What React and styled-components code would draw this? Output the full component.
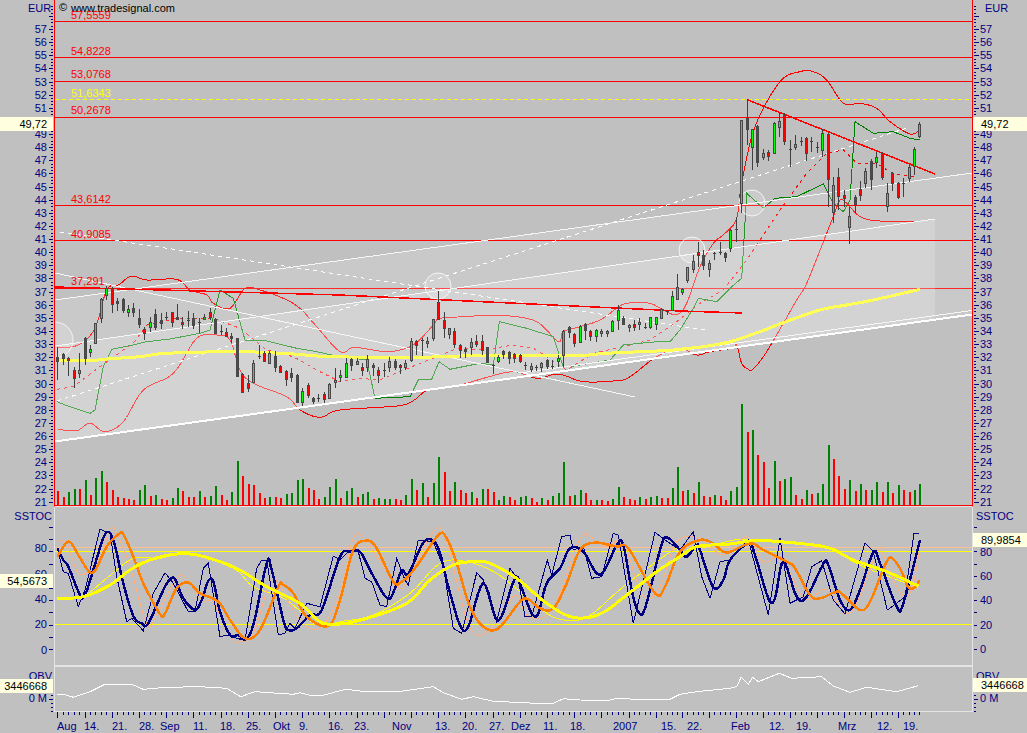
import React from 'react';
import styled, { createGlobalStyle } from 'styled-components';

const GlobalStyle = createGlobalStyle`
  html, body { margin: 0; padding: 0; background: #c0c0c0; }
  body { font-family: "Liberation Sans", Arial, sans-serif; }
`;

// Layout
const Chart = styled.div`
  position: relative;
  width: 1027px;
  height: 733px;
  overflow: hidden;
  display: flex;
  flex-direction: column;
  background: #c0c0c0;
`;

const Pane = styled.div`
  position: relative;
  display: flex;
  height: ${(p) => p.$h}px;
`;

const Axis = styled.svg`
  display: block;
  width: 54px;
  height: 100%;
  flex: none;
`;

const Plot = styled.svg`
  display: block;
  box-sizing: content-box;
  flex: none;
  width: 917px;
  height: ${(p) => p.$h}px;
  border-left: 1px solid ${(p) => p.$edge};
  border-right: 1px solid ${(p) => p.$edge};
  border-bottom: ${(p) => p.$bottom}px solid #e4e4e4;
`;

const DateAxis = styled.svg`
  display: block;
  width: 1027px;
  height: 21px;
`;

const Badge = styled.div`
  position: absolute;
  top: ${(p) => p.$top}px;
  ${(p) => (p.$right ? 'left: 973px; padding-left: 8px; width: 46px;' : 'left: 0; text-align: right; padding-right: 6px; width: 47px;')}
  height: 14px;
  line-height: 14px;
  background: #ffffe0;
  color: #000;
  font-size: 11px;
`;

// Chart parts
const Label = styled.text`
  font-family: "Liberation Sans", Arial, sans-serif;
  font-size: 11px;
  fill: ${(p) => p.$color || '#000080'};
`;

const Tick = styled.line`
  stroke: #000080;
  stroke-width: 1;
  shape-rendering: crispEdges;
`;

const Trace = styled.polyline`
  fill: none;
  stroke: ${(p) => p.$color};
  stroke-width: ${(p) => p.$w || 1};
  stroke-dasharray: ${(p) => p.$dash || 'none'};
  shape-rendering: crispEdges;
`;

const Level = styled.line`
  stroke: ${(p) => p.$color || '#ff0000'};
  stroke-width: ${(p) => p.$w || 1};
  stroke-dasharray: ${(p) => p.$dash || 'none'};
  shape-rendering: crispEdges;
`;

const Band = styled.polygon`
  fill: rgba(255, 255, 255, ${(p) => p.$alpha});
  stroke: none;
`;

const Ring = styled.circle`
  fill: rgba(255, 255, 255, 0.18);
  stroke: #f4f4f4;
  stroke-width: 1;
`;

const Wick = styled.line`
  stroke: #404040;
  stroke-width: 1;
  shape-rendering: crispEdges;
`;

const Body = styled.rect`
  fill: ${(p) => (p.$up ? '#00ff00' : '#ff0000')};
  stroke: #484848;
  stroke-width: 1;
  shape-rendering: crispEdges;
`;

const VolumeBar = styled.rect`
  fill: ${(p) => (p.$up ? '#008000' : '#ff0000')};
  shape-rendering: crispEdges;
`;

// Data, read off the picture in zoomed pixels: x,y pairs at 3x with an offset
const trace = (offX, offY, flat) => {
  const out = [];
  for (let i = 0; i < flat.length; i += 2) out.push([offX + flat[i] / 3, offY + flat[i + 1] / 3]);
  return out;
};

// Catmull-Rom through the read points, the indicators are curves in the picture
const smooth = (pts) => {
  const out = [];
  for (let i = 0; i < pts.length - 1; i++) {
    const a = pts[Math.max(i - 1, 0)];
    const b = pts[i];
    const c = pts[i + 1];
    const d = pts[Math.min(i + 2, pts.length - 1)];
    for (let s = 0; s < 6; s++) {
      const t = s / 6;
      const f = (k) => 0.5 * (2 * b[k] + (c[k] - a[k]) * t + (2 * a[k] - 5 * b[k] + 4 * c[k] - d[k]) * t * t + (3 * b[k] - a[k] - 3 * c[k] + d[k]) * t * t * t);
      out.push([f(0), f(1)]);
    }
  }
  out.push(pts[pts.length - 1]);
  return out;
};

const toPoints = (pts) => pts.map(([x, y]) => `${x.toFixed(1)},${y.toFixed(1)}`).join(' ');

const barX = (i) => (i <= 114 ? 57.3 + 5.44 * i : 681.7 + 5.4 * (i - 115));
const priceY = (p) => 29 + (57 - p) * 13.13;

const candlesA = [
  [230,330,262,272,'r'],[250,285,252,265,'r'],[262,318,265,270,'r'],[292,355,300,325,'r'],[250,325,300,308,'g'],
  [200,285,203,263,'r'],[225,262,237,245,'g'],[158,220,160,220,'g'],[85,160,88,145,'g'],[48,90,55,75,'g'],
  [50,130,55,103,'r'],[85,122,92,100,'r'],[85,130,88,120,'r'],[105,140,118,127,'g'],[100,140,115,127,'r'],
  [118,175,145,163,'r'],[170,210,178,190,'r'],[140,185,157,172,'g'],[118,180,133,170,'r'],[128,178,150,160,'r'],
  [127,150,141,141,'d'],[125,170,127,155,'r'],[103,150,140,145,'r'],[140,178,155,163,'r'],[123,170,149,149,'d'],
  [128,178,145,165,'r'],[145,190,156,156,'d'],[133,150,140,145,'g'],[115,150,127,142,'r'],[145,188,147,188,'r'],
  [165,195,183,183,'d'],[175,200,187,197,'r'],[190,220,198,205,'r'],[205,320,205,318,'r'],[310,370,312,365,'r'],
  [315,365,340,355,'r'],[270,338,280,335,'g'],[225,268,257,257,'d'],[243,275,248,272,'r'],[243,280,248,278,'g'],
  [243,305,258,290,'r'],[285,310,288,305,'r'],[300,348,302,328,'r'],[295,335,310,322,'r'],[312,400,314,397,'r'],
  [355,408,362,395,'g'],[340,385,344,375,'r'],[380,403,385,393,'r'],[373,395,383,383,'d'],[365,398,373,388,'r'],
  [340,385,343,383,'g'],[295,355,330,337,'g'],[300,335,315,322,'g'],[265,320,278,320,'g'],[265,303,267,285,'r'],
  [265,285,273,281,'g'],[280,318,291,299,'r'],[255,305,267,290,'g'],[280,318,284,290,'r'],[292,338,300,315,'r'],
  [280,320,299,299,'d'],[260,305,273,290,'g'],[268,300,273,290,'r'],[282,312,284,291,'r'],[270,300,278,290,'g'],
  [205,275,212,270,'g'],[210,255,212,225,'r'],[205,258,210,210,'d'],[200,235,213,220,'g'],[148,212,148,205,'g'],
  [62,150,95,148,'r'],[125,205,150,173,'r'],[175,207,175,193,'g'],[175,235,183,223,'r'],[222,263,224,240,'r'],
  [232,263,236,241,'r'],[205,255,217,230,'g'],[195,232,213,222,'r'],[195,255,213,240,'r'],[230,280,232,277,'r'],
  [282,312,285,285,'d'],[255,280,262,272,'g'],[240,268,243,252,'r'],[243,283,245,265,'r'],[250,280,252,263,'r'],
  [252,280,255,272,'r'],[275,300,285,285,'d'],[280,305,288,298,'g'],[285,303,290,290,'d'],[275,305,280,290,'g'],
  [268,298,270,287,'r'],[270,296,287,287,'d'],[255,292,264,272,'g'],[180,290,182,255,'g'],[168,205,170,187,'r'],
  [190,230,192,220,'r'],[165,218,167,217,'g'],[160,210,162,180,'r'],[180,212,182,197,'r'],[177,215,179,197,'g'],
  [178,200,184,190,'g'],[180,200,182,185,'g'],[150,185,152,182,'g'],[105,180,120,150,'g'],[138,165,145,162,'r'],
  [162,185,164,170,'g'],[150,183,163,172,'r'],[145,180,155,163,'g'],[160,178,170,170,'d'],[140,178,142,170,'g'],
  [140,180,142,162,'g'],[115,145,117,145,'g'],[120,135,122,122,'d'],[63,120,78,120,'g'],[12,90,52,88,'g'],
];

const candlesB = [
  [655,675,658,665,'g'],[590,640,592,630,'g'],[555,610,572,598,'g'],[515,590,545,555,'r'],[540,600,555,585,'r'],
  [570,622,580,598,'g'],[545,570,548,548,'d'],[515,555,545,545,'d'],[545,575,550,560,'r'],[478,545,480,535,'g'],
  [440,515,478,478,'d'],[150,430,150,400,'g'],[88,225,143,178,'r'],[178,300,178,230,'g'],[165,290,167,277,'r'],
  [238,270,250,260,'g'],[240,272,245,257,'r'],[155,252,160,250,'g'],[130,202,153,172,'g'],[130,225,135,213,'r'],
  [210,290,238,238,'d'],[195,240,223,232,'g'],[200,228,212,212,'d'],[200,272,203,250,'r'],[200,247,212,212,'d'],
  [215,250,232,232,'d'],[178,262,190,240,'g'],[190,410,192,328,'r'],[322,460,346,427,'g'],[295,420,322,377,'r'],
  [360,410,374,384,'r'],[410,522,438,472,'g'],[375,428,381,403,'r'],[332,392,358,374,'r'],[295,355,303,340,'g'],
  [268,360,272,328,'r'],[245,295,260,277,'g'],[245,330,250,320,'r'],[340,425,368,408,'g'],[305,362,308,340,'r'],
  [335,388,338,380,'r'],[325,382,340,340,'d'],[285,335,292,323,'g'],[232,315,238,288,'g'],[155,203,163,197,'g'],
];

const candles = [
  ...candlesA.map((c, i) => ({ i, off: 270, c })),
  ...candlesB.map((c, i) => ({ i: i + 115, off: 70, c })),
];

const volumes = [
  // first stretch: 3x offset 270
  ...[[663,0],[680,0],[666,1],[657,1],[657,0],[630,1],[675,0],[624,1],[603,1],[636,0],[660,0],[681,0],[684,0],[686,0],[690,0],[660,1],[645,1],[678,0],[675,1],[687,0],[690,0],[684,1],[654,1],[663,0],[681,0],[681,0],[663,1],[681,0],[678,1],[648,1],[675,0],[690,0],[666,1],[573,1],[618,0],[642,0],[645,0],[669,0],[684,0],[681,1],[681,0],[684,0],[672,1],[669,1],[630,1],[627,1],[654,0],[660,0],[687,0],[681,1],[651,1],[627,1]],
  ...[[684,0],[663,1],[654,1],[681,0],[672,1],[666,1],[687,0],[684,1],[687,1],[687,1],[687,0],[690,0],[675,1],[627,1],[660,0],[639,1],[681,0],[639,1],[561,1],[606,0],[663,0],[636,1],[660,0],[669,0],[666,1],[684,0],[657,1],[657,0],[666,0],[690,1],[678,1],[681,0],[690,0],[681,1],[678,1],[684,0],[696,0],[684,1],[690,0],[678,1],[669,1],[576,1],[678,0],[675,1],[660,1],[669,0],[690,0],[690,1],[690,0],[693,0],[687,1],[651,1],[681,0],[687,0],[690,0],[681,1],[687,0],[681,1],[678,1],[684,0],[684,0],[654,1],[591,1]],
].map(([t, up]) => [270 + t / 3, up]).concat(
  // last stretch: 3x offset 300
  [[573,0],[570,1],[579,0],[546,1],[588,0],[591,0],[585,1],[588,0],[600,0],[573,1],[561,1],[312,1],[396,0],[390,1],[465,0],[486,0],[564,0],[483,1],[543,0],[537,1],[531,1],[585,0],[597,0],[570,1],[582,0],[579,1],[552,1],[435,1],[477,0],[528,0],[567,0],[540,1],[573,0],[552,1],[570,0],[570,1],[546,1],[576,0],[546,1],[579,0],[555,1],[570,0],[576,0],[570,1],[552,1]].map(([t, up]) => [300 + t / 3, up])
);

const upperBand = smooth([
  ...trace(0, 270, [175,232,235,225,285,175,320,60,355,45,395,18,440,30,530,28,570,60,620,75,640,100,690,115,735,55,780,60,850,85,900,115,950,170,1020,245]),
  ...trace(340, 270, [40,232,100,240,150,245,220,225,280,165,300,145,380,140,420,137,500,137,590,155,655,215,670,185,720,170,780,150,830,115,860,100,930,100,1020,130]),
  ...trace(680, 70, [60,590,100,520,135,490,170,445,185,340,225,170,300,35,360,5,400,5,440,30,490,100,540,100,590,115,630,155,690,192,720,180]),
]);
const midBand = [
  ...trace(0, 270, [172,358,220,350,300,290,370,240,400,220,440,165,530,145,640,145,720,175,800,240,880,260,960,305,1020,335]),
  ...trace(340, 270, [60,325,120,330,190,300,280,265,350,235,430,240,520,225,580,235,620,260,680,300,760,250,850,230,930,210,1010,155]),
  ...trace(680, 70, [60,700,130,660,200,570,300,420,380,310,440,250,490,240,530,280,590,280,640,312,710,322]),
];
const greenBand = [
  ...trace(0, 270, [172,395,200,407,270,430,285,420,310,290,335,238,400,225,440,215,510,207,600,190,630,180,660,60,700,85,735,210,790,210,890,235,950,245,1020,260]),
  ...trace(340, 270, [80,270,105,385,210,380,235,330,275,328,297,275,330,298,420,280,460,285,478,155,560,175,640,200,670,290,690,290,810,270,850,225,950,215,990,215,1020,180]),
  ...trace(680, 70, [40,715,55,685,110,695,155,650,185,625,200,370,250,415,285,385,350,380,430,342,460,400,490,425,510,390,525,155,580,190,640,185,690,205,720,210]),
];
const lowerBand = smooth([
  ...trace(0, 270, [175,478,230,482,270,460,315,485,370,455,430,360,520,310,590,205,650,195,690,210,720,300,760,340,860,380,900,420,960,442,1020,420]),
  ...trace(340, 270, [170,408,220,392,265,360,360,345,430,325,520,305,590,325,655,312,730,335,830,332,870,320,950,260,1020,235]),
  ...trace(680, 300, [50,165,90,155,155,145,170,135,185,190,205,208,218,208,260,155,350,0]),
  ...trace(680, 70, [380,640,440,490,460,440,480,390,500,400,550,445,640,455,710,455]),
]);
const average = smooth([
  ...trace(0, 270, [172,272,270,272,320,267,420,260,500,250,700,245,850,250,950,258,1020,260]),
  ...trace(340, 270, [90,263,240,262,440,256,700,257,800,250,950,243,1020,238]),
  ...trace(680, 300, [130,130,240,95,310,68,420,30,500,15,580,0]),
  ...trace(680, 70, [720,658]),
]);
const fallingRed = trace(0, 0, [165,861,1020,885,2040,933,2226,939]);

const navyThick = smooth([
  ...trace(0, 500, [172,145,190,180,205,200,240,285,255,285,280,210,315,103,340,120,370,250,400,348,425,370,445,370,490,270,510,238,525,238,550,295,585,330,605,300,625,243,640,245,660,335,690,405,715,405,735,418,760,375,800,190,815,210,850,360,865,390,890,385,930,345,965,330,1020,170]),
  ...trace(340, 500, [30,155,60,155,90,210,135,288,155,288,185,212,205,222,250,128,280,122,300,160,325,260,360,375,385,380,430,250,475,362,525,235,545,265,575,340,595,340,620,250,660,205,690,145,730,155,780,225,830,135,850,135,875,270,895,335,915,325,960,150,980,112,1020,150]),
  ...trace(680, 500, [20,170,50,135,60,150,100,262,130,240,150,180,205,130,225,165,265,295,285,295,310,185,350,290,380,290,430,192,445,195,480,300,510,330,540,270,580,157,600,190,650,320,670,310,720,120]),
]);
const navyThin = [
  ...trace(0, 500, [172,145,190,215,205,220,235,320,255,270,300,88,330,100,350,230,380,365,395,355,430,392,460,280,495,218,520,250,565,335,585,335,610,205,625,190,660,410,680,405,735,422,770,205,785,180,800,180,835,405,855,400,870,370,885,385,920,310,960,320,1000,168,1020,180]),
  ...trace(340, 500, [30,150,55,155,75,235,95,245,120,315,140,320,170,175,195,240,205,255,235,120,280,125,310,200,340,385,365,400,410,218,430,240,470,365,510,205,535,240,555,350,575,350,622,180,635,225,665,110,690,105,700,150,730,140,755,235,785,230,820,100,835,105,880,370,945,97,975,120,1020,150]),
  ...trace(680, 500, [40,95,65,230,90,295,120,185,150,180,205,120,265,345,300,115,330,310,370,290,395,200,425,182,460,300,495,342,555,128,580,155,622,330,650,310,675,290,702,100,717,100]),
];
const orangeThick = smooth([
  ...trace(0, 500, [172,170,205,125,235,165,265,212,285,212,320,140,355,103,370,103,400,170,430,250,480,342,495,340,530,265,565,248,600,280,655,305,690,360,735,415,780,390,835,260,850,255,880,280,920,350,985,378,1020,300]),
  ...trace(340, 500, [40,150,80,122,110,145,160,245,185,245,225,205,295,105,320,115,350,190,390,320,430,380,475,385,540,305,565,298,600,325,640,325,680,250,720,150,765,128,830,140,865,145,945,280,975,260,1020,155]),
  ...trace(680, 500, [60,120,100,130,140,158,210,130,250,150,320,185,345,205,390,285,420,295,470,275,490,285,540,330,570,305,620,185,640,178,665,215,685,262,705,262,718,240]),
]);
const orangeThin = smooth([
  ...trace(0, 500, [172,125,200,130,240,225,300,170,330,88,350,100,390,200,440,370,470,345,530,235,565,240,605,300,640,310,695,415,720,425,760,400,810,245,835,250,885,340,930,385,970,375,1020,280]),
  ...trace(340, 500, [40,115,75,120,170,255,200,245,280,95,320,125,390,385,460,380,525,285,565,350,640,325,720,115,770,125,800,140,850,130,910,290,960,260,1010,125]),
  ...trace(680, 500, [60,115,130,165,200,110,250,185,300,170,340,240,380,300,440,268,510,340,590,160,610,165,650,260,680,290,700,250,717,160]),
]);
const yellowThick = smooth([
  ...trace(0, 500, [172,295,250,290,330,255,390,210,450,180,530,162,590,165,660,185,720,210,800,260,900,310,960,365,1020,372]),
  ...trace(340, 500, [80,355,200,310,270,240,340,195,400,185,450,190,530,235,620,310,700,352,780,342,860,285,950,215,1020,170]),
  ...trace(680, 500, [50,140,150,132,220,122,300,125,440,142,520,180,620,215,715,258]),
]);
const yellowThin = smooth([
  ...trace(0, 500, [172,295,250,288,320,235,400,175,480,175,560,160,700,205,760,260,860,300,950,375,1020,365]),
  ...trace(340, 500, [100,345,210,280,300,190,380,185,470,220,570,300,650,355,740,352,850,260,1000,150,1020,160]),
  ...trace(680, 500, [100,135,180,118,300,122,430,140,540,195,640,235,715,262]),
]);
const obv = [
  ...trace(0, 500, [172,585,190,582,220,592,270,575,315,553,400,555,430,568,500,562,600,560,680,565,722,590,765,575,880,583,900,578,930,586,970,586,1020,572]),
  ...trace(340, 500, [20,568,60,573,190,573,280,560,310,578,365,598,400,590,460,604,590,610,640,610,670,596,720,600,800,602,835,594,880,598,990,598,1020,583]),
  ...trace(680, 500, [50,575,150,565,170,560,183,532,205,552,218,532,235,545,298,520,335,535,425,530,460,558,510,577,560,562,650,575,715,557]),
];

const redLevels = [21, 57, 80.5, 117, 205, 240];
const levelTexts = [
  ['57,5559', 19, '#ff0000'], ['54,8228', 55, '#ff0000'], ['53,0768', 78, '#ff0000'], ['51,6343', 97, '#ffff00'],
  ['50,2678', 114, '#ff0000'], ['43,6142', 203, '#ff0000'], ['40,9085', 238, '#ff0000'], ['37,291', 285, '#ff0000'],
];
const dates = [
  ['Aug',57],['14.',84],['21.',112],['28.',139],['Sep',160],['11.',193],['18.',220],['25.',246],['Okt',273],['9.',299],['16.',328],
  ['23.',354],['Nov',392],['13.',435],['20.',462],['27.',489],['Dez',511],['11.',543],['18.',570],['2007',613],['15.',661],
  ['22.',687],['Feb',731],['12.',769],['19.',796],['Mrz',838],['12.',877],['19.',903],
];

const range = (from, to, step) => {
  const out = [];
  for (let v = from; v <= to + 1e-6; v += step) out.push(v);
  return out;
};

// One price axis: the side decides where the ticks and numbers sit
const PriceAxis = ({ right }) => (
  <Axis viewBox={right ? '973 0 54 507' : '0 0 54 507'}>
    <Label x={right ? 985 : 28} y={12}>EUR</Label>
    {range(21, 58.75, 0.25).map((p) => {
      const major = Number.isInteger(p);
      const y = Math.round(priceY(p)) + 0.5;
      return right
        ? <Tick key={p} x1={974} x2={major ? 979 : 976} y1={y} y2={y} />
        : <Tick key={p} x1={major ? 49 : 51} x2={53} y1={y} y2={y} />;
    })}
    {range(21, 57, 1).map((p) => (
      <Label key={p} x={right ? 980 : 47} y={priceY(p) + 4} textAnchor={right ? 'start' : 'end'}>{p}</Label>
    ))}
  </Axis>
);

const StochAxis = ({ right }) => {
  const rows = right
    ? [[80, 552], [60, 576], [40, 600], [20, 625], [0, 649]]
    : [[80, 548], [60, 574], [40, 599], [20, 624], [0, 650]];
  return (
    <Axis viewBox={right ? '973 507 54 160' : '0 507 54 160'}>
      <Label x={right ? 976 : 52} y={520} textAnchor={right ? 'start' : 'end'}>SSTOC</Label>
      {range(527, 660, 12.2).map((y) => {
        const yy = Math.round(y) + 0.5;
        return right
          ? <Tick key={y} x1={974} x2={977} y1={yy} y2={yy} />
          : <Tick key={y} x1={49} x2={53} y1={yy} y2={yy} />;
      })}
      {rows.map(([v, y]) => (
        <Label key={v} x={right ? 980 : 47} y={y + 4} textAnchor={right ? 'start' : 'end'}>{v}</Label>
      ))}
    </Axis>
  );
};

const ObvAxis = ({ right }) => (
  <Axis viewBox={right ? '973 667 54 44' : '0 667 54 44'}>
    <Label x={right ? 976 : 52} y={679} textAnchor={right ? 'start' : 'end'}>OBV</Label>
    <Label x={right ? 980 : 47} y={701} textAnchor={right ? 'start' : 'end'}>0 M</Label>
    <Label x={right ? 980 : 47} y={719} textAnchor={right ? 'start' : 'end'}>-5 M</Label>
    {range(686, 710, 4).map((y) => (
      right
        ? <Tick key={y} x1={974} x2={y === 698 ? 978 : 976} y1={y + 0.5} y2={y + 0.5} />
        : <Tick key={y} x1={y === 698 ? 49 : 51} x2={53} y1={y + 0.5} y2={y + 0.5} />
    ))}
  </Axis>
);

const Candle = ({ i, off, c }) => {
  const [hi, lo, top, bot, kind] = c;
  const x = Math.round(barX(i));
  const y = (v) => Math.round(off + v / 3);
  return (
    <g>
      <Wick x1={x + 0.5} x2={x + 0.5} y1={y(hi)} y2={y(lo)} />
      {kind === 'd'
        ? <Wick x1={x - 1} x2={x + 2} y1={y(top) + 0.5} y2={y(top) + 0.5} />
        : <Body $up={kind === 'g'} x={x - 1 + 0.5} y={y(top) + 0.5} width={2} height={Math.max(y(bot) - y(top), 2)} />}
    </g>
  );
};

export default function App() {
  return (
    <Chart>
      <GlobalStyle />

      <Pane $h={507}>
        <PriceAxis />
        <Plot viewBox="55 0 917 506" $h={506} $edge="#ff0000" $bottom={1}>
          {/* lines that lie under the pale channels */}
          <Level x1={55} x2={972} y1={288.5} y2={288.5} />
          <Trace points={toPoints(upperBand)} $color="#ff0000" />
          <Trace points={toPoints(midBand)} $color="#ff0000" $dash="3 4" />
          <Trace points={toPoints(greenBand)} $color="#008000" />
          <Trace points={toPoints(lowerBand)} $color="#ff0000" />

          <Band points="55,300 972,173 972,314 55,441" $alpha={0.15} />
          <Band points="55,346 935,219 935,320 55,441" $alpha={0.2} />

          {redLevels.map((y) => <Level key={y} x1={55} x2={972} y1={y + 0.5} y2={y + 0.5} />)}
          <Level x1={55} x2={972} y1={99.5} y2={99.5} $color="#ffff00" $dash="4 3" />

          <Level x1={55} x2={972} y1={300} y2={173} $color="#f6f6f6" />
          <Level x1={55} x2={935} y1={346} y2={219} $color="#f6f6f6" />
          <Level x1={55} x2={972} y1={441.5} y2={314.5} $color="#ffffff" $w={2} />
          <Level x1={520} x2={972} y1={373} y2={310.5} $color="#f6f6f6" />
          <Level x1={55} x2={635} y1={273} y2={397} $color="#f6f6f6" />
          <Level x1={57} x2={910} y1={401} y2={127} $color="#ffffff" $dash="4 4" />
          <Level x1={60} x2={705} y1={232} y2={330} $color="#ffffff" $dash="4 4" />

          <Trace points={toPoints(average)} $color="#ffff55" $w={3} />
          <Trace points={toPoints(fallingRed)} $color="#ff0000" $w={1.5} />
          <Level x1={748} x2={935} y1={100} y2={174} $w={1.5} />

          <Ring cx={55} cy={340} r={18} />
          <Ring cx={438} cy={286} r={13} />
          <Ring cx={692} cy={250} r={13} />
          <Ring cx={752} cy={203} r={13} />

          {candles.map((k) => <Candle key={k.i} {...k} />)}
          {volumes.map(([top, up], i) => (
            <VolumeBar key={i} $up={up === 1} x={Math.round(barX(i))} y={Math.round(top)} width={2} height={505 - Math.round(top)} />
          ))}
          <Level x1={55} x2={972} y1={505.5} y2={505.5} />

          <Label x={59} y={11} $color="#000000">©</Label>
          <Label x={71} y={12} $color="#000000">www.tradesignal.com</Label>
          {levelTexts.map(([t, y, color]) => <Label key={t} x={71} y={y} $color={color}>{t}</Label>)}
        </Plot>
        <PriceAxis right />
        <Badge $top={117}>49,72</Badge>
        <Badge $top={117} $right>49,72</Badge>
      </Pane>

      <Pane $h={160}>
        <StochAxis />
        <Plot viewBox="55 507 917 158" $h={158} $edge="#e4e4e4" $bottom={2}>
          <Level x1={55} x2={972} y1={547.5} y2={547.5} $color="#ffc090" />
          <Level x1={55} x2={972} y1={551.5} y2={551.5} $color="#ffff00" />
          <Level x1={55} x2={972} y1={624.5} y2={624.5} $color="#ffff00" />
          <Trace points={toPoints(yellowThin)} $color="#ffff00" />
          <Trace points={toPoints(orangeThin)} $color="#ffb080" />
          <Trace points={toPoints(navyThin)} $color="#000080" />
          <Trace points={toPoints(navyThick)} $color="#000080" $w={2.5} />
          <Trace points={toPoints(orangeThick)} $color="#ff8000" $w={2.5} />
          <Trace points={toPoints(yellowThick)} $color="#ffff00" $w={3} />
        </Plot>
        <StochAxis right />
        <Badge $top={67}>54,5673</Badge>
        <Badge $top={26} $right>89,9854</Badge>
      </Pane>

      <Pane $h={45}>
        <ObvAxis />
        <Plot viewBox="55 667 917 44" $h={44} $edge="#e4e4e4" $bottom={1}>
          <Trace points={toPoints(obv)} $color="#ffffff" />
        </Plot>
        <ObvAxis right />
        <Badge $top={12}>3446668</Badge>
        <Badge $top={11} $right>3446668</Badge>
      </Pane>

      <DateAxis viewBox="0 712 1027 21">
        {range(0, 159, 1).map((i) => {
          const x = Math.round(barX(i)) + 0.5;
          return <Tick key={i} x1={x} x2={x} y1={712} y2={i % 5 === 0 ? 718 : 715} />;
        })}
        {dates.map(([t, x], i) => <Label key={i} x={x} y={730}>{t}</Label>)}
      </DateAxis>
    </Chart>
  );
}
